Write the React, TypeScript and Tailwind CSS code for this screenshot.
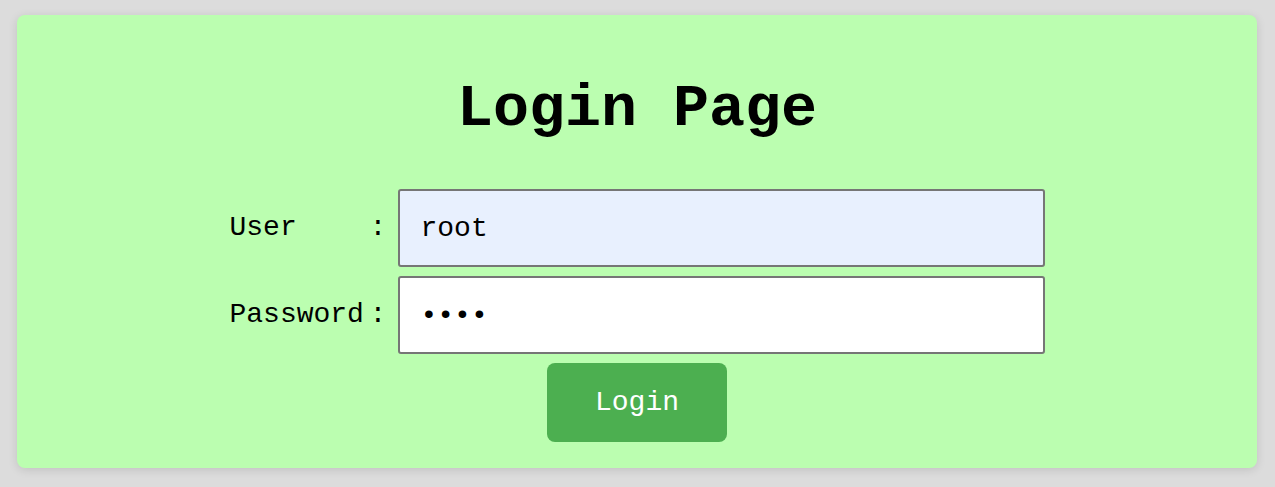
import { useState } from "react";

export default function App() {
  const [user, setUser] = useState("root");
  const [password, setPassword] = useState("1234");

  return (
    <div className="min-h-screen bg-[#dcdcdc] pl-[17px] pr-[18px] pt-[15px] pb-[19px] font-['Liberation_Mono',monospace]">
      {/* Card */}
      <div className="flex flex-col items-center rounded-[8px] bg-[#bbfeb0] pt-[60px] pb-[26px] shadow-[0_2px_10px_rgba(0,0,0,0.12)]">
        <h1 className="text-[60px] leading-[68px] font-bold text-black">Login Page</h1>

        <form
          className="mt-[46px] flex flex-col items-center"
          onSubmit={(e) => e.preventDefault()}
        >
          <div className="flex flex-col gap-[9px]">
            <div className="flex items-center">
              <label className="w-[140px] text-[28px] text-black">User</label>
              <span className="w-[28px] text-[28px] text-black">:</span>
              <input
                type="text"
                value={user}
                onChange={(e) => setUser(e.target.value)}
                className="h-[78px] w-[647px] rounded-[3px] border-2 border-[#767676] bg-[#e8f0fe] px-[21px] text-[28px] text-black outline-none"
              />
            </div>
            <div className="flex items-center">
              <label className="w-[140px] text-[28px] text-black">Password</label>
              <span className="w-[28px] text-[28px] text-black">:</span>
              <input
                type="password"
                value={password}
                onChange={(e) => setPassword(e.target.value)}
                className="h-[78px] w-[647px] rounded-[3px] border-2 border-[#767676] bg-white px-[21px] text-[28px] text-black outline-none"
              />
            </div>
          </div>

          <button
            type="submit"
            className="mt-[9px] h-[79px] w-[180px] rounded-[8px] bg-[#4caf50] text-[28px] text-white"
          >
            Login
          </button>
        </form>
      </div>
    </div>
  );
}
